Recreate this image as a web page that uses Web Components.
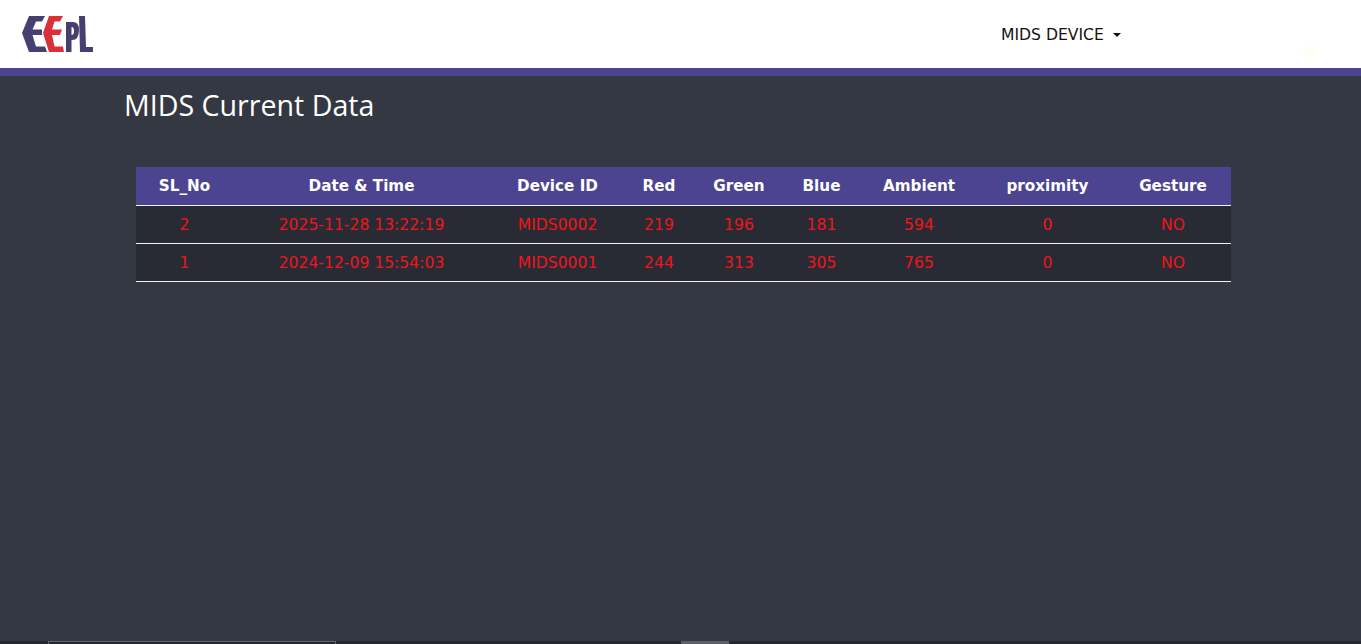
<!DOCTYPE html>
<html lang="en">
<head>
<meta charset="utf-8">
<title>MIDS Current Data</title>
<style>
  html, body { margin: 0; height: 100%; }
  body { background: #343843; overflow: hidden; }
</style>
</head>
<body>
<app-shell>
  <top-bar slot="top" label="MIDS DEVICE"></top-bar>
  <data-page heading="MIDS Current Data"></data-page>
</app-shell>

<script>
// page frame: header on top, content, thin strip at the bottom
class AppShell extends HTMLElement {
  constructor() {
    super();
    this.attachShadow({ mode: 'open' });
    this.shadowRoot.innerHTML = `
      <style>
        :host {
          display: flex;
          flex-direction: column;
          height: 644px;
          background: #343843;
        }
        main { flex: 1; min-height: 0; }
        .strip {
          height: 3px;
          background: #23262c;
          display: flex;
          padding-left: 48px;
        }
        .strip .tab {
          width: 288px;
          border: 1px solid #62656b;
          border-bottom: 0;
          box-sizing: border-box;
        }
        .strip .thumb {
          width: 48px;
          margin-left: 345px;
          background: #5c5f66;
        }
      </style>
      <slot name="top"></slot>
      <main><slot></slot></main>
      <div class="strip"><div class="tab"></div><div class="thumb"></div></div>
    `;
  }
}

// white bar with logo and device dropdown
class TopBar extends HTMLElement {
  constructor() {
    super();
    this.attachShadow({ mode: 'open' });
  }

  connectedCallback() {
    const label = this.getAttribute('label') || '';
    this.shadowRoot.innerHTML = `
      <style>
        :host {
          display: flex;
          align-items: flex-start;
          height: 68px;
          background: #fff;
          border-bottom: 8px solid #4c4491;
          font-family: "DejaVu Sans", Verdana, sans-serif;
        }
        .logo { margin: 14px 0 0 21px; width: 74px; height: 40px; flex: none; }
        .menu {
          margin: 26px 0 0 906px;
          display: flex;
          align-items: center;
          gap: 9px;
          font-size: 15.6px;
          line-height: 18px;
          color: #111;
          white-space: nowrap;
        }
        .caret {
          width: 0;
          height: 0;
          border-top: 4px solid #111;
          border-left: 4px solid transparent;
          border-right: 4px solid transparent;
        }
        .glow {
          margin: 42px 0 0 177px;
          width: 24px;
          height: 18px;
          background: radial-gradient(closest-side, #fffef5 40%, #ffffff);
        }
      </style>
      <svg class="logo" viewBox="21 14 74 40" role="img" aria-label="EEPL logo">
        <polygon fill="#45406f" points="29,16 45,16 42,21.500 36,21.500 32.500,29.500 42,29.500 42,35 32.500,35 36,46.500 45,46.500 47,52 29,52 22,33"/>
        <polygon fill="#d9303a" points="49,16 63,16 60,21.500 54.500,21.500 52,29.500 62,29.500 60,35 52,35 54.500,46.500 63,46.500 64,52 49,52 43,33"/>
        <path fill="#45406f" fill-rule="evenodd" d="M66 52 V22 H73 Q79 22 79 30 Q79 40 72 40 H71.500 V52 Z M71.500 27 V35 Q74 35 74 31 Q74 27 71.500 27 Z"/>
        <polygon fill="#45406f" points="79,16 85,16 86,47 93,47 93,52 80,52"/>
      </svg>
      <div class="menu">${label}<span class="caret"></span></div>
      <div class="glow"></div>
    `;
  }
}

// heading plus the table of readings
class DataPage extends HTMLElement {
  constructor() {
    super();
    this.attachShadow({ mode: 'open' });
  }

  connectedCallback() {
    const columns = [
      ['SL_No', 97], ['Date & Time', 257], ['Device ID', 135], ['Red', 68], ['Green', 92],
      ['Blue', 73], ['Ambient', 122], ['proximity', 135], ['Gesture', 116]
    ];
    const rows = [
      ['2', '2025-11-28 13:22:19', 'MIDS0002', '219', '196', '181', '594', '0', 'NO'],
      ['1', '2024-12-09 15:54:03', 'MIDS0001', '244', '313', '305', '765', '0', 'NO']
    ];

    this.shadowRoot.innerHTML = `
      <style>
        :host {
          display: block;
          padding: 12px 130px 0 124px;
          color: #fff;
        }
        h1 {
          margin: 0 0 45px;
          font: 400 28.6px/34px "Open Sans", "Noto Sans", sans-serif;
        }
        table {
          margin-left: 12px;
          width: 1095px;
          border-collapse: collapse;
          table-layout: fixed;
          font: 15.6px/18px "DejaVu Sans", Verdana, sans-serif;
        }
        th, td { text-align: center; padding: 0; border-bottom: 1px solid #f2f2f2; }
        th { height: 37px; padding-bottom: 1px; background: #4c4491; font-weight: 700; font-size: 15.2px; box-sizing: content-box; }
        td { height: 36px; padding-top: 1px; background: #282b33; color: #f0141c; box-sizing: content-box; }
      </style>
      <h1>${this.getAttribute('heading') || ''}</h1>
      <table>
        <colgroup>${columns.map(c => `<col style="width:${c[1]}px">`).join('')}</colgroup>
        <thead><tr>${columns.map(c => `<th>${c[0].replace('&', '&amp;')}</th>`).join('')}</tr></thead>
        <tbody>${rows.map(r => `<tr>${r.map(v => `<td>${v}</td>`).join('')}</tr>`).join('')}</tbody>
      </table>
    `;
  }
}

customElements.define('app-shell', AppShell);
customElements.define('top-bar', TopBar);
customElements.define('data-page', DataPage);
</script>
</body>
</html>
